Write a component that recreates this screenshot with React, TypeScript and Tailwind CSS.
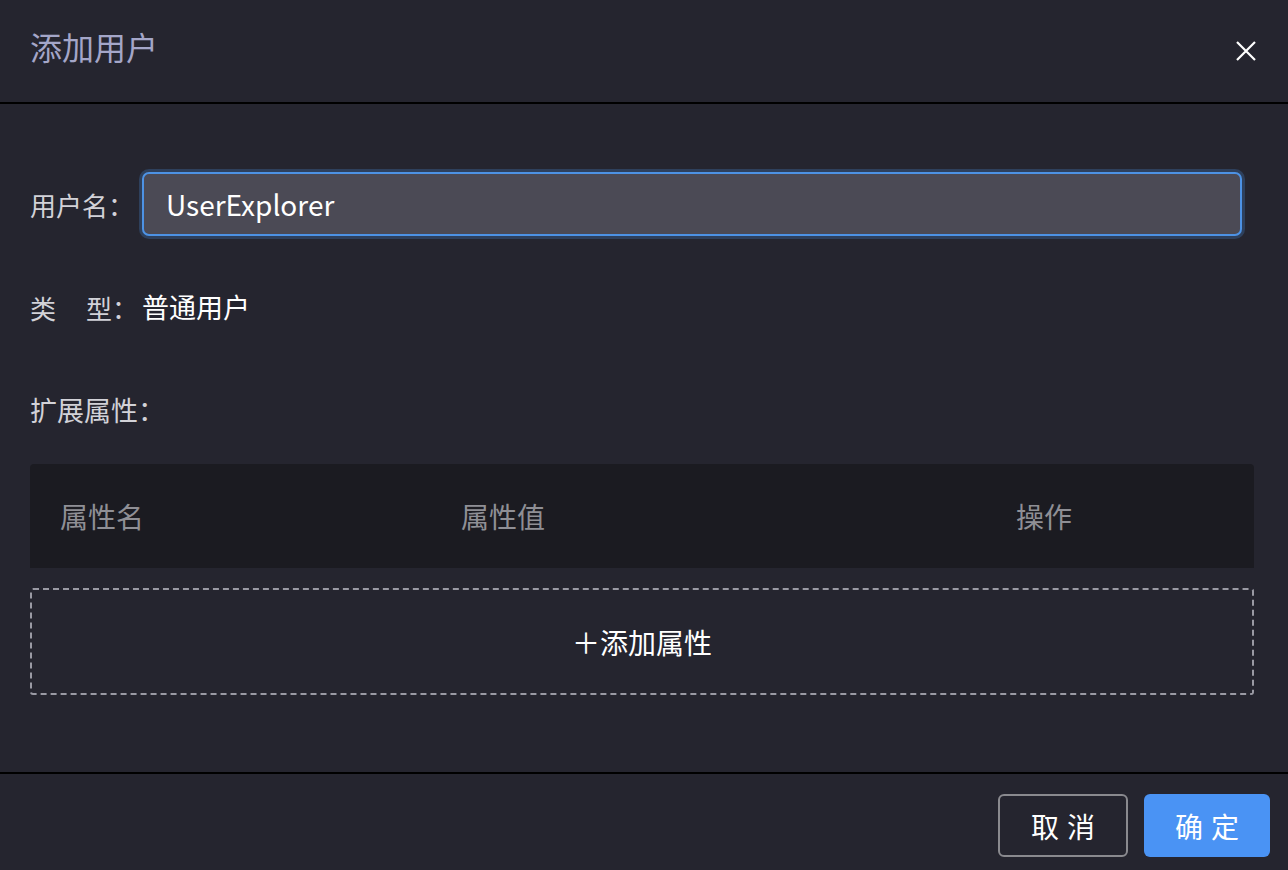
import { useState } from "react";

const font = { fontFamily: '"Noto Sans CJK SC", "Noto Sans", sans-serif' };

export default function App() {
  const [userName, setUserName] = useState("UserExplorer");

  return (
    <div className="w-[1288px] h-[870px] bg-[#25252f] flex flex-col text-white" style={font}>
      <div className="h-[104px] shrink-0 flex items-center justify-between pl-[30px] pr-[30px] border-b-2 border-black">
        <h1 className="text-[32px] leading-[40px] text-[#a4a6c8] mb-[10px]">添加用户</h1>
        <button className="w-[24px] h-[24px] flex items-center justify-center">
          <svg width="22" height="22" viewBox="0 0 22 22" fill="none" stroke="white" strokeWidth="2.2">
            <path d="M2 2 L20 20 M20 2 L2 20" />
          </svg>
        </button>
      </div>

      <div className="flex-1 flex flex-col pl-[30px] pr-[34px] pt-[68px]">
        <div className="flex items-center">
          <label className="w-[112px] text-[26px] text-[#d2d2d8]">用户名：</label>
          <input
            type="text"
            value={userName}
            onChange={(e) => setUserName(e.target.value)}
            className="w-[1100px] h-[64px] rounded-[7px] bg-[#4b4a55] border-2 border-[#4d92e4] ring-[3px] ring-[#2e405c] outline-none px-[22px] text-[28px] text-white"
            style={font}
          />
        </div>

        <div className="flex items-center mt-[53px] h-[36px] text-[27px]">
          <span className="w-[112px] text-[#d2d2d8] flex text-[26px]">
            类<span className="inline-block w-[30px]" />型：
          </span>
          <span>普通用户</span>
        </div>

        <div className="mt-[67px] h-[36px] flex items-center text-[27px] text-[#d2d2d8]">扩展属性：</div>

        <div className="mt-[36px] h-[104px] bg-[#1b1b21] rounded-t-[4px] grid grid-cols-[401px_555px_1fr] items-center text-[28px] text-[#8f8f95]">
          <div className="pl-[30px]">属性名</div>
          <div className="pl-[30px]">属性值</div>
          <div className="pl-[30px]">操作</div>
        </div>

        <button className="mt-[20px] h-[107px] border-2 border-dashed border-[#9a9aa4] rounded-[3px] flex items-center justify-center text-[28px] text-white">
          ＋添加属性
        </button>
      </div>

      <div className="h-[98px] shrink-0 border-t-2 border-black flex items-center justify-end gap-[16px] pr-[18px] pt-[7px]">
        <button className="w-[130px] h-[63px] rounded-[6px] border-2 border-[#8a8a8f] text-[28px] tracking-[8px] pl-[8px] text-white">
          取消
        </button>
        <button className="w-[126px] h-[63px] rounded-[6px] bg-[#4a93f4] text-[28px] tracking-[8px] pl-[8px] text-white">
          确定
        </button>
      </div>
    </div>
  );
}
